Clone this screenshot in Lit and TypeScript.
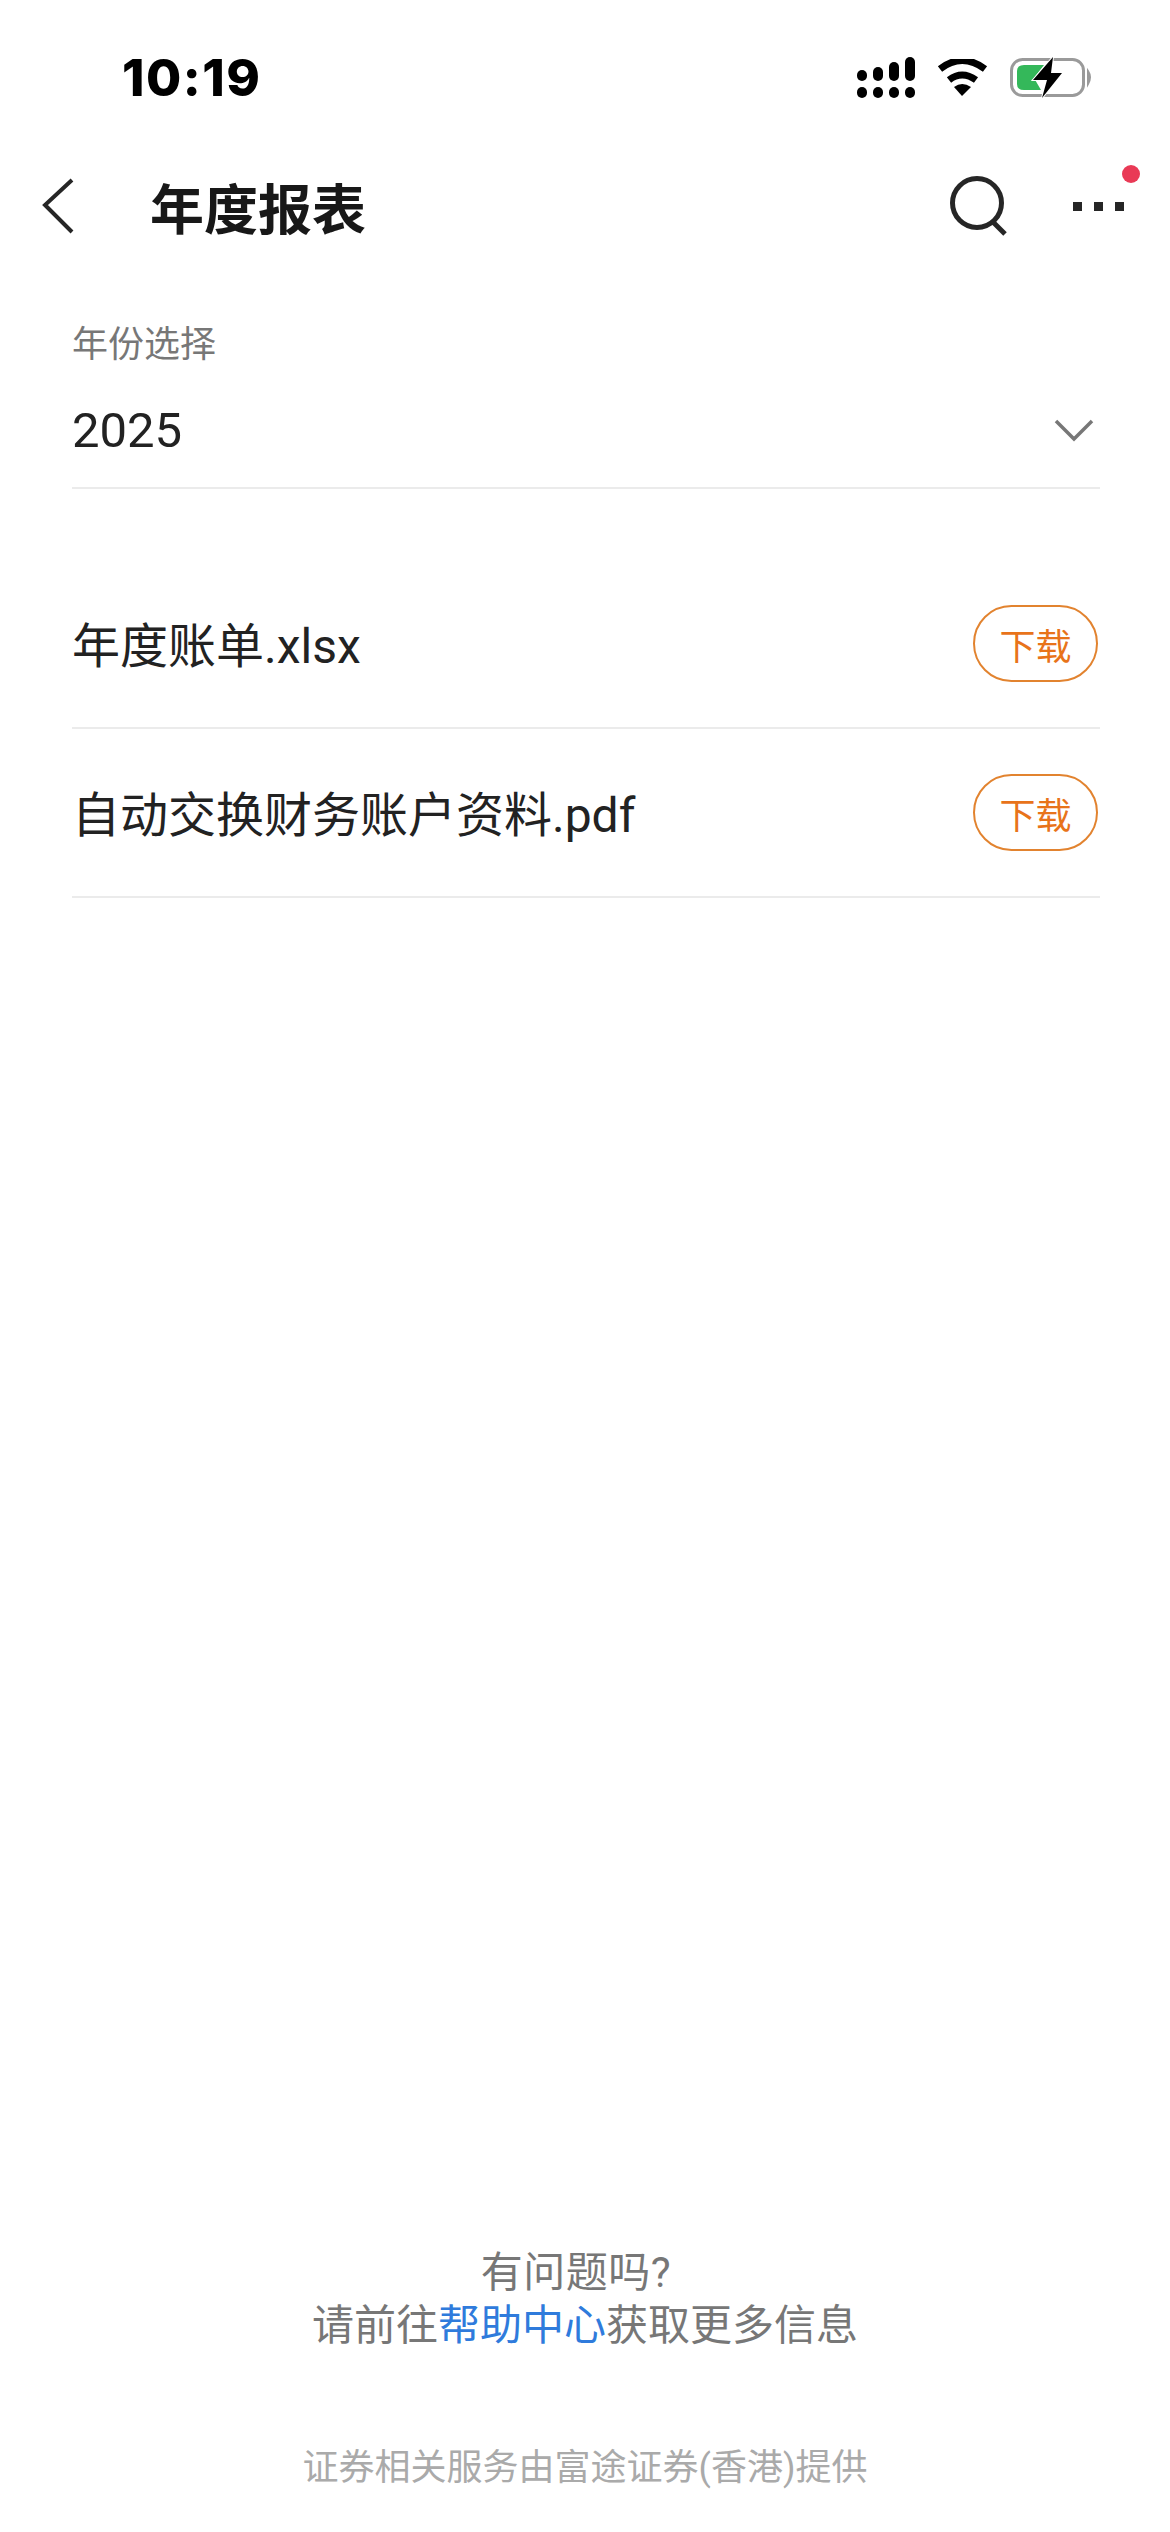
import { LitElement, html, css, svg } from 'lit';
import { customElement } from 'lit/decorators.js';

const signalBars = [
  [856, 70, 11],
  [872, 67, 14],
  [888, 62, 19],
  [904, 57, 24],
];

const files = ['年度账单.xlsx', '自动交换财务账户资料.pdf'];

@customElement('app-root')
export class AppRoot extends LitElement {
  static styles = css`
    :host {
      display: flex;
      flex-direction: column;
      width: 1170px;
      height: 2532px;
      background: #fff;
      color: #1c1c1c;
      font-family: 'Roboto', 'Noto Sans CJK SC', sans-serif;
    }

    .status {
      display: flex;
      align-items: center;
      justify-content: space-between;
      height: 154px;
      padding: 0 78px 0 122px;
      box-sizing: border-box;
    }

    .time {
      font-family: 'Inter', sans-serif;
      font-size: 51px;
      font-weight: 800;
      color: #000;
      letter-spacing: 1.5px;
    }

    .status-icons {
      display: flex;
      align-items: center;
      gap: 22px;
    }

    svg {
      display: block;
    }

    .nav {
      display: flex;
      align-items: center;
      height: 104px;
      padding: 0 46px 4px 41px;
    }

    .title {
      margin-left: 75px;
      font-size: 54px;
      font-weight: 700;
      color: #181818;
      flex: 1;
    }

    .more {
      position: relative;
      margin-left: 63px;
    }

    .more .dot {
      position: absolute;
      top: -37px;
      right: -16px;
      width: 18px;
      height: 18px;
      border-radius: 50%;
      background: #e93a56;
    }

    .year {
      margin: 57px 70px 71px 72px;
      border-bottom: 2px solid #ebebeb;
    }

    .year-label {
      font-size: 36px;
      line-height: 52px;
      color: #777;
    }

    .year-value {
      display: flex;
      align-items: center;
      justify-content: space-between;
      height: 114px;
      margin-top: 2px;
      padding-right: 6px;
      font-size: 49px;
      color: #222;
    }

    .row {
      display: flex;
      align-items: center;
      justify-content: space-between;
      height: 167px;
      margin: 0 70px 0 72px;
      border-bottom: 2px solid #ebebeb;
      font-size: 48px;
      color: #222;
    }

    .name {
      padding-bottom: 4px;
    }

    .download {
      display: flex;
      align-items: center;
      justify-content: center;
      width: 125px;
      height: 77px;
      margin-right: 2px;
      box-sizing: border-box;
      border: 2px solid #e2832f;
      border-radius: 39px;
      font-size: 36px;
      color: #e8731a;
    }

    .help {
      margin-top: auto;
      text-align: center;
      font-size: 42px;
      line-height: 53px;
      color: #777;
    }

    .help .question {
      padding-right: 18px;
      letter-spacing: 0.5px;
    }

    .help a {
      color: #2f7bdc;
    }

    .provider {
      margin: 89px 0 37px;
      text-align: center;
      font-size: 36px;
      line-height: 54px;
      color: #aaa;
    }
  `;

  private _statusIcons() {
    return html`
      <div class="status-icons">
        <svg width="58" height="41" viewBox="856 57 58 41">
          ${signalBars.map(
            ([x, y, h]) => svg`
              <rect x=${x} y=${y} width="10" height=${h} rx="5" fill="#000"></rect>
              <rect x=${x} y="87" width="10" height="11" rx="5" fill="#000"></rect>
            `
          )}
        </svg>
        <svg width="51" height="37" viewBox="936 59 51 37">
          <path d="M939 69 Q961 52 984 69" fill="none" stroke="#000" stroke-width="7"></path>
          <path d="M948 80 Q961 70 975 80" fill="none" stroke="#000" stroke-width="7"></path>
          <path d="M953 87 Q961 81 970 87 L961 96 Z" fill="#000"></path>
        </svg>
        <svg width="82" height="41" viewBox="1009 57 82 41">
          <rect x="1010.5" y="59.5" width="72" height="36" rx="11" fill="#fff" stroke="#9a9a9a" stroke-width="3"></rect>
          <path d="M1023 65 H1043 L1033 78 L1040 90 H1023 Q1016 90 1016 84 V71 Q1016 65 1023 65 Z" fill="#34b85a"></path>
          <path d="M1087 71 Q1091 77 1087 84 Z" fill="#9a9a9a" stroke="#9a9a9a" stroke-width="2"></path>
          <path
            d="M1052 57 L1032 80 H1046 L1041 98 L1061 73 H1050 Z"
            fill="#000"
            stroke="#fff"
            stroke-width="2"
            paint-order="stroke"
          ></path>
        </svg>
      </div>
    `;
  }

  render() {
    return html`
      <div class="status">
        <span class="time">10:19</span>
        ${this._statusIcons()}
      </div>
      <div class="nav">
        <svg width="34" height="56" viewBox="0 0 34 56">
          <path d="M31 2 L4 27 L31 54" fill="none" stroke="#262626" stroke-width="4"></path>
        </svg>
        <div class="title">年度报表</div>
        <svg width="60" height="60" viewBox="0 0 60 60">
          <circle cx="27" cy="27" r="24.5" fill="none" stroke="#262626" stroke-width="5"></circle>
          <path d="M42 45 L55 58" fill="none" stroke="#262626" stroke-width="5"></path>
        </svg>
        <div class="more">
          <svg width="51" height="9" viewBox="0 0 51 9" fill="#262626">
            <rect x="0" width="9" height="9"></rect>
            <rect x="21" width="9" height="9"></rect>
            <rect x="42" width="9" height="9"></rect>
          </svg>
          <span class="dot"></span>
        </div>
      </div>
      <div class="year">
        <div class="year-label">年份选择</div>
        <div class="year-value">
          <span>2025</span>
          <svg width="40" height="24" viewBox="0 0 40 24">
            <path d="M2 3 L20 21 L38 3" fill="none" stroke="#777" stroke-width="3.5"></path>
          </svg>
        </div>
      </div>
      ${files.map(
        (name) => html`
          <div class="row">
            <span class="name">${name}</span>
            <span class="download">下载</span>
          </div>
        `
      )}
      <div class="help">
        <div><span class="question">有问题吗?</span></div>
        <div>请前往<a>帮助中心</a>获取更多信息</div>
      </div>
      <div class="provider">证券相关服务由富途证券(香港)提供</div>
    `;
  }
}
